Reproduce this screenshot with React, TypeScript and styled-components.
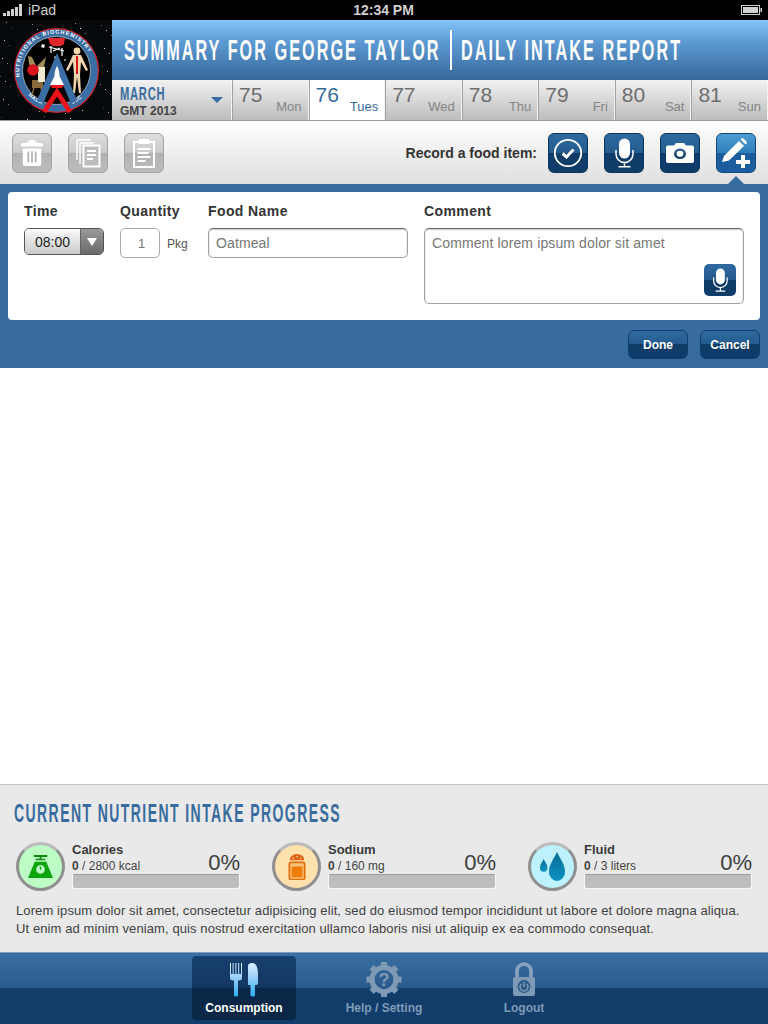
import React from "react";
import styled, { createGlobalStyle, css } from "styled-components";

const Global = createGlobalStyle`
  html, body { margin: 0; padding: 0; background: #fff; }
  body { font-family: "Liberation Sans", Arial, sans-serif; }
  * { box-sizing: border-box; }
`;

const Page = styled.div`
  width: 768px;
  height: 1024px;
  display: flex;
  flex-direction: column;
  overflow: hidden;
`;

const StatusBar = styled.div`
  height: 20px;
  background: #000;
  color: #d0d0d0;
  font-size: 14px;
  display: grid;
  grid-template-columns: 1fr auto 1fr;
  align-items: center;
  padding: 0 6px 0 3px;
`;

const StatusLeft = styled.div`
  display: flex;
  align-items: center;
  gap: 6px;
`;

const StatusTime = styled.div`
  font-weight: bold;
  font-size: 14px;
  padding-left: 2px;
`;

const StatusRight = styled.div`
  display: flex;
  justify-content: flex-end;
`;

const Header = styled.div`
  height: 101px;
  display: flex;
  border-bottom: 1px solid #9a9a9a;
`;

const Logo = styled.svg`
  width: 112px;
  height: 100px;
  flex-shrink: 0;
  display: block;
`;

const HeaderMain = styled.div`
  flex: 1;
  min-width: 0;
  display: flex;
  flex-direction: column;
`;

const TitleBand = styled.div`
  height: 60px;
  background: linear-gradient(#86c3fb 0, #5e9bd4 35%, #35689b 100%);
  display: flex;
  align-items: center;
  padding: 0 0 0 12px;
`;

// no Bebas here, so squeeze a bold sans to get the tall poster look
const condensed = css`
  font-weight: bold;
  text-transform: uppercase;
  white-space: nowrap;
  transform-origin: left center;
`;

const Title = styled.div<{ $width: number }>`
  ${condensed}
  width: ${({ $width }) => $width}px;
  flex-shrink: 0;
  color: #fff;
  font-size: 29px;
  letter-spacing: 3.6px;
  line-height: 40px;
  transform: scaleX(0.56);
`;

const TitleDivider = styled.div`
  width: 2px;
  height: 40px;
  background: #fff;
  margin: 0 9px 0 11px;
`;

const DateRow = styled.div`
  height: 40px;
  display: grid;
  grid-template-columns: 120px repeat(7, minmax(0, 1fr));
`;

const silver = css`
  background: linear-gradient(#f2f2f2, #bcbcbc);
`;

const MonthCell = styled.div`
  ${silver}
  border-right: 1px solid #f4f4f4;
  padding: 5px 8px 0;
  position: relative;
`;

const MonthName = styled.div`
  ${condensed}
  color: #386c9f;
  font-size: 18px;
  line-height: 19px;
  letter-spacing: 1.2px;
  transform: scaleX(0.62);
`;

const MonthYear = styled.div`
  color: #444;
  font-size: 12px;
  font-weight: bold;
  line-height: 13px;
  margin-top: 1px;
`;

const MonthCaret = styled.div`
  position: absolute;
  right: 8px;
  top: 17px;
  border-left: 6px solid transparent;
  border-right: 6px solid transparent;
  border-top: 6px solid #386c9f;
`;

const DayCell = styled.div<{ $active?: boolean }>`
  ${({ $active }) => ($active ? "background: #fff;" : silver)}
  border-left: 1px solid #9f9f9f;
  border-right: 1px solid #f4f4f4;
  padding: 3px 6px 0 6px;
  display: flex;
  flex-direction: column;
  color: ${({ $active }) => ($active ? "#386c9f" : "#6e6e6e")};
`;

const DayNumber = styled.div`
  font-size: 21px;
  line-height: 23px;
`;

const DayName = styled.div<{ $active?: boolean }>`
  align-self: flex-end;
  font-size: 13px;
  line-height: 14px;
  margin-top: -6px;
  color: ${({ $active }) => ($active ? "#386c9f" : "#858585")};
`;

const Toolbar = styled.div`
  height: 63px;
  background: linear-gradient(#fff, #dfdfdf);
  display: flex;
  align-items: center;
  padding: 0 12px;
  gap: 16px;
  position: relative;
`;

const RecordLabel = styled.div`
  margin-left: auto;
  font-size: 14px;
  font-weight: bold;
  color: #333;
  margin-right: -5px;
`;

const IconButton = styled.div<{ $kind: "gray" | "dark" | "bright" }>`
  width: 40px;
  height: 40px;
  border-radius: 6px;
  display: flex;
  align-items: center;
  justify-content: center;
  ${({ $kind }) =>
    $kind === "gray"
      ? `background: linear-gradient(#dedede, #c9c9c9 49%, #b3b3b3 50%, #bbb);
         border: 1px solid #a3a3a3;`
      : $kind === "dark"
      ? `background: linear-gradient(#2f6a9f, #245b8e 49%, #103c6a 50%, #103c6a);
         border: 1px solid #0d3560;`
      : `background: linear-gradient(#4b9cd2, #2f80ba 49%, #1b5d9e 50%, #1b5d9e);
         border: 1px solid #12487d;`}
`;

const Pointer = styled.div`
  position: absolute;
  right: 24px;
  bottom: 0;
  border-left: 8px solid transparent;
  border-right: 8px solid transparent;
  border-bottom: 8px solid #386c9f;
`;

const FormPanel = styled.div`
  height: 184px;
  background: #386c9f;
  padding: 8px 8px 0;
`;

const FormCard = styled.div`
  height: 128px;
  background: #fff;
  border-radius: 4px;
  padding: 11px 16px 0;
  display: flex;
`;

const Field = styled.div<{ $width: number; $gap: number }>`
  width: ${({ $width }) => $width}px;
  margin-right: ${({ $gap }) => $gap}px;
`;

const FieldLabel = styled.div`
  font-size: 14px;
  letter-spacing: 0.4px;
  font-weight: bold;
  color: #333;
  line-height: 16px;
  margin-bottom: 9px;
`;

const SelectBox = styled.div`
  width: 80px;
  height: 27px;
  margin-top: 1px;
  border: 1px solid #555;
  border-radius: 5px;
  display: flex;
  overflow: hidden;
`;

const SelectValue = styled.div`
  flex: 1;
  background: linear-gradient(#fbfbfb, #c9c9c9);
  border-right: 1px solid #666;
  font-size: 14px;
  color: #222;
  display: flex;
  align-items: center;
  justify-content: center;
`;

const SelectArrow = styled.div`
  width: 22px;
  background: linear-gradient(#9a9a9a, #6a6a6a);
  display: flex;
  align-items: center;
  justify-content: center;

  &::after {
    content: "";
    border-left: 5px solid transparent;
    border-right: 5px solid transparent;
    border-top: 8px solid #fff;
  }
`;

const QuantityRow = styled.div`
  display: flex;
  align-items: center;
  gap: 7px;
`;

const QuantityBox = styled.div`
  width: 40px;
  height: 30px;
  border: 1px solid #a9a9a9;
  border-radius: 5px;
  color: #777;
  font-size: 13px;
  display: flex;
  align-items: center;
  justify-content: center;
  padding-left: 3px;
`;

const Unit = styled.div`
  font-size: 12px;
  color: #555;
  padding-top: 1px;
`;

const TextBox = styled.div<{ $tall?: boolean }>`
  height: ${({ $tall }) => ($tall ? 76 : 30)}px;
  border: 1px solid #a0a0a0;
  border-top-color: #666;
  border-radius: 5px;
  box-shadow: inset 0 1px 2px rgba(0, 0, 0, 0.22);
  color: #777;
  font-size: 14px;
  letter-spacing: 0.12px;
  line-height: 16px;
  padding: 6px 7px;
  position: relative;
`;

const MicButton = styled.div`
  position: absolute;
  right: 7px;
  bottom: 7px;
  width: 32px;
  height: 32px;
  border-radius: 5px;
  background: linear-gradient(#2f6a9f, #245b8e 49%, #103c6a 50%, #103c6a);
  display: flex;
  align-items: center;
  justify-content: center;
`;

const FormActions = styled.div`
  display: flex;
  justify-content: flex-end;
  gap: 12px;
  margin-top: 10px;
`;

const ActionButton = styled.div`
  width: 60px;
  height: 29px;
  border-radius: 6px;
  border: 1px solid #11406f;
  background: linear-gradient(#2f6a9f, #245b8e 49%, #103c6a 50%, #103c6a);
  color: #fff;
  font-size: 12px;
  font-weight: bold;
  display: flex;
  align-items: center;
  justify-content: center;
`;

const Blank = styled.div`
  flex: 1;
  background: #fff;
`;

const Progress = styled.div`
  height: 168px;
  background: #e9e9e9;
  border-top: 1px solid #c6c6c6;
  padding: 13px 16px 0;
`;

const ProgressTitle = styled.div`
  ${condensed}
  color: #386c9f;
  font-size: 25px;
  line-height: 30px;
  letter-spacing: 2.55px;
  margin: 0 0 0 -2px;
  transform: scaleX(0.56);
`;

const NutrientGrid = styled.div`
  display: grid;
  grid-template-columns: repeat(3, 224px);
  column-gap: 32px;
  margin-top: 14px;
`;

const Nutrient = styled.div`
  display: flex;
  gap: 7px;
  height: 50px;
`;

const Badge = styled.div<{ $bg: string }>`
  width: 49px;
  height: 49px;
  border-radius: 50%;
  flex-shrink: 0;
  background: ${({ $bg }) => $bg};
  border: 3px solid #8f8f8f;
  border-top-color: #bcbcbc;
  display: flex;
  align-items: center;
  justify-content: center;
`;

const NutrientBody = styled.div`
  flex: 1;
  min-width: 0;
`;

const NutrientHead = styled.div`
  display: flex;
  justify-content: space-between;
  align-items: flex-end;
  height: 32px;
`;

const NutrientName = styled.div`
  font-size: 13px;
  font-weight: bold;
  color: #3a3a3a;
  line-height: 15px;
  margin-bottom: 1px;
`;

const NutrientAmount = styled.div`
  font-size: 12px;
  color: #444;
  line-height: 16px;
`;

const Percent = styled.div`
  font-size: 22px;
  color: #3d3d3d;
  line-height: 24px;
  margin-bottom: -1px;
`;

const Bar = styled.div`
  height: 15px;
  background: #bdbdbd;
  border-radius: 3px;
  border: 1px solid #f8f8f8;
  border-top-color: #9d9d9d;
`;

const ProgressNote = styled.p`
  margin: 10px 0 0;
  font-size: 13px;
  letter-spacing: 0.1px;
  line-height: 18px;
  color: #3f3f3f;
  white-space: nowrap;
`;

const TabBar = styled.div`
  height: 72px;
  background: linear-gradient(#3a6fa3, #2b5b8c 49%, #123d6b 50%, #123d6b);
  border-top: 1px solid #7f9dba;
  display: flex;
  justify-content: center;
  gap: 36px;
  padding-top: 3px;
`;

const TabItem = styled.div<{ $active?: boolean }>`
  width: 104px;
  height: 64px;
  border-radius: 4px;
  display: flex;
  flex-direction: column;
  align-items: center;
  padding-top: 6px;
  color: ${({ $active }) => ($active ? "#fff" : "#7f9ab5")};
  background: ${({ $active }) =>
    $active ? "linear-gradient(#17406f, #133763 49%, #0a2747 50%, #0a2747)" : "transparent"};
`;

const TabIcon = styled.svg`
  display: block;
  width: 40px;
  height: 36px;
`;

const TabLabel = styled.div`
  font-size: 12px;
  font-weight: bold;
  line-height: 14px;
  margin-top: 3px;
`;

const days = [
  ["75", "Mon"],
  ["76", "Tues"],
  ["77", "Wed"],
  ["78", "Thu"],
  ["79", "Fri"],
  ["80", "Sat"],
  ["81", "Sun"],
];

const stars = Array.from({ length: 70 }, (_, i) => ({
  x: (i * 37 + 11) % 112,
  y: (i * 53 + 7) % 100,
  o: 0.25 + ((i * 7) % 10) / 14,
}));

function MissionLogo() {
  return (
    <Logo viewBox="0 0 112 100">
      <rect width="112" height="100" fill="#06090c" />
      {stars.map((s, i) => (
        <rect key={i} x={s.x} y={s.y} width="1" height="1" fill="#fff" opacity={s.o} />
      ))}
      <circle cx="56.5" cy="50.5" r="42.500" fill="#d8262c" />
      <circle cx="56.5" cy="50.5" r="41.300" fill="#3a6ea5" />
      <circle cx="56.5" cy="50.5" r="34" fill="#000" stroke="#dfe7ee" strokeWidth="0.6" />
      <defs>
        <path id="ringTop" d="M 20 58 A 37.200 37.200 0 1 1 93 58" />
        <path id="ringBottom" d="M 23 68 A 38.500 38.500 0 0 0 90 68" />
      </defs>
      <text fontFamily="'Liberation Sans', sans-serif" fontSize="5.4" fontWeight="bold" fill="#fff" letterSpacing="1.05">
        <textPath href="#ringTop" startOffset="1">NUTRITIONAL BIOCHEMISTRY</textPath>
      </text>
      <text fontFamily="'Liberation Sans', sans-serif" fontSize="5.2" fontWeight="bold" fill="#fff" letterSpacing="0.5">
        <textPath href="#ringBottom" startOffset="9">NASA</textPath>
      </text>
      <text fontFamily="'Liberation Sans', sans-serif" fontSize="5.2" fontWeight="bold" fill="#fff" letterSpacing="0.5">
        <textPath href="#ringBottom" startOffset="57">JSC</textPath>
      </text>
      {/* red cap and station */}
      <path d="M48 18h17l-1 6-3 2h-8l-3-2z" fill="#e0262c" />
      <path d="M49 27l15 4M51 26v7M62 28v8M53 31l7-3" stroke="#fff" strokeWidth="1.2" fill="none" />
      <path d="M42 24l3 1-1 3-3-1zM55 36l2 1-1 2-2-1zM65 39l1 1-1 1-1-1z" fill="#fff" />
      {/* wheat, apple and cream over the stand */}
      <path d="M28 36l4 1 6 13-5 0-4-6zM46 37l-2 10-4 4-3-5z" fill="#a08a55" />
      <path d="M32 60h11v8H32z" fill="#8a6a3a" />
      <path d="M38 47h7v15h-7z" fill="#efe9d2" />
      <circle cx="33" cy="50" r="5.800" fill="#d7141c" />
      <path d="M34 68l-2 7M41 68l1 5" stroke="#8a6a3a" strokeWidth="1.500" />
      {/* body figure */}
      <circle cx="77" cy="31" r="3.400" fill="#f2d6ae" />
      <path d="M73 35h8l7 15-2 1-5-9-1 13 1 18h-2l-2-16-2 16h-2l1-18-1-13-5 9-2-1z" fill="#f2d6ae" />
      <path d="M77 36v18" stroke="#d7141c" strokeWidth="2" />
      {/* chevron and shuttle */}
      <path d="M40 82L57 42l17 40" fill="none" stroke="#3a6ea5" strokeWidth="7" strokeLinejoin="miter" />
      <path d="M44 92l13-20 13 20" fill="none" stroke="#e8141c" strokeWidth="5" strokeLinejoin="miter" />
      <path d="M57 46c1.500 2.500 2.500 6 2.500 10l4.500 9H50l4.500-9c0-4 1-7.500 2.500-10z" fill="#fff" />
      <path d="M50 65h14l-2 3H52z" fill="#e8141c" />
    </Logo>
  );
}

const white = { fill: "#fff" };

function TrashIcon() {
  return (
    <svg width="24" height="28" viewBox="0 0 26 30">
      <path d="M9 3l1-2h6l1 2 8 2v3H1V5z" {...white} />
      <path
        fillRule="evenodd"
        d="M3 10h20v17a2 2 0 0 1-2 2H5a2 2 0 0 1-2-2zM8 13v12h2V13zM12 13v12h2V13zM16 13v12h2V13z"
        {...white}
      />
    </svg>
  );
}

function CopyIcon() {
  return (
    <svg width="26" height="30" viewBox="0 0 26 30" fill="none" stroke="#fff" strokeWidth="1.400">
      <path d="M2 2h14M2 2v20M5 5h14M5 5v21" />
      <rect x="8.500" y="7.500" width="16" height="21" fill="#bdbdbd" strokeWidth="2" />
      <path d="M12 13h9M12 17h9M12 21h6" strokeWidth="2" />
    </svg>
  );
}

function ClipboardIcon() {
  return (
    <svg width="24" height="30" viewBox="0 0 24 30" fill="none" stroke="#fff" strokeWidth="2">
      <rect x="2" y="4" width="20" height="25" />
      <rect x="7" y="1" width="10" height="5" fill="#fff" stroke="none" />
      <path d="M5.500 11h13M5.500 15h11M5.500 19h13M5.500 23h8" />
    </svg>
  );
}

function CheckIcon() {
  return (
    <svg width="30" height="30" viewBox="0 0 30 30" fill="none" stroke="#fff">
      <circle cx="15" cy="15" r="13.200" strokeWidth="1.800" />
      <path d="M9.500 15.500l4 3.500 7-7.500" strokeWidth="3" />
    </svg>
  );
}

function MicIcon({ size }: { size: number }) {
  return (
    <svg width={size * 0.7} height={size} viewBox="0 0 21 30" fill="none" stroke="#fff" strokeWidth="1.500">
      <rect x="5" y="0.500" width="11" height="20" rx="5.500" fill="#fff" stroke="none" />
      <path d="M2 12v4a8.500 8.500 0 0 0 17 0v-4M10.500 24.500v4M4.500 28.800h12" />
    </svg>
  );
}

function CameraIcon() {
  return (
    <svg width="28" height="21" viewBox="0 0 28 24" preserveAspectRatio="none">
      <path
        fillRule="evenodd"
        d="M2 4h6l2-3h8l2 3h6a2 2 0 0 1 2 2v16a2 2 0 0 1-2 2H2a2 2 0 0 1-2-2V6a2 2 0 0 1 2-2zM14 7.500a6 6 0 1 0 0 12 6 6 0 0 0 0-12zM14 10a3.500 3.500 0 1 1 0 7 3.500 3.500 0 0 1 0-7z"
        {...white}
      />
    </svg>
  );
}

function PencilPlusIcon() {
  return (
    <svg width="30" height="30" viewBox="0 0 30 30">
      <path d="M1 24l2-6L18 3l5 5L8 22.500z" {...white} />
      <path d="M19.500 1.500l1-1a1.500 1.500 0 0 1 2 0l3 3a1.500 1.500 0 0 1 0 2l-1 1z" {...white} />
      <path d="M20 17h4v5h5v4h-5v4h-4v-4h-5v-4h5z" {...white} />
    </svg>
  );
}

function ScaleIcon() {
  return (
    <svg width="25" height="23" viewBox="0 0 26 24">
      <path d="M6 0h14v2H6zM8 4h10v1.500H8z" fill="#0f8a0f" />
      <path d="M12 2h2v3h-2z" fill="#0f8a0f" />
      <path
        fillRule="evenodd"
        d="M7 7h12l7 17H0zM13 10.500a4.500 4.500 0 1 0 0 9 4.500 4.500 0 0 0 0-9z"
        fill="#0aa50a"
      />
      <path d="M12.300 12h1.400v3.500h-1.400z" fill="#0aa50a" />
    </svg>
  );
}

function ShakerIcon() {
  return (
    <svg width="18" height="27" viewBox="0 0 20 30">
      <path d="M2 8a8 7 0 0 1 16 0z" fill="#e2600f" />
      <circle cx="6" cy="6" r="0.900" fill="#ffdca8" />
      <circle cx="10" cy="4" r="0.900" fill="#ffdca8" />
      <circle cx="14" cy="6" r="0.900" fill="#ffdca8" />
      <rect x="1.500" y="10.500" width="17" height="19" rx="2" fill="#f6c47a" stroke="#e2700f" strokeWidth="2" />
      <rect x="4" y="15" width="12" height="12" fill="#ee7d0a" />
    </svg>
  );
}

function DropsIcon() {
  return (
    <svg width="25" height="29" viewBox="0 0 25 29">
      <defs>
        <linearGradient id="dropFill" x1="0" y1="0" x2="0" y2="1">
          <stop offset="0" stopColor="#0b6a94" />
          <stop offset="1" stopColor="#0a93c4" />
        </linearGradient>
      </defs>
      <path d="M17 0c2.500 6 8 12 8 20a8 9 0 0 1-16 0c0-8 5.500-14 8-20z" fill="url(#dropFill)" />
      <path d="M3.700 7c1 2.500 3.700 5 3.700 8.500a3.700 4.300 0 0 1-7.400 0C0 12 2.700 9.500 3.700 7z" fill="url(#dropFill)" />
    </svg>
  );
}

function CutleryIcon() {
  return (
    <TabIcon viewBox="0 0 40 36">
      <defs>
        <linearGradient id="blade" x1="0" y1="0" x2="0" y2="1">
          <stop offset="0" stopColor="#dbeeff" />
          <stop offset="0.5" stopColor="#8ecbf8" />
          <stop offset="1" stopColor="#27aef2" />
        </linearGradient>
      </defs>
      <path
        d="M6 1h1v11h1.600V1h1v11h1.800V1h1v11h1.800V1h1v11H17V1h1v15c0 1.500-1 2.500-3 2.500H14V33a1.500 1.500 0 0 1-1.500 1.500h-1A1.500 1.500 0 0 1 10 33V18.500H9c-2 0-3-1-3-2.500z"
        fill="url(#blade)"
      />
      <path
        d="M24 4c0-2 1.500-3 4.500-3S34 5 34 12v9c0 1-1 2-2 2h-1v10a1.500 1.500 0 0 1-1.500 1.500H28a1.500 1.500 0 0 1-1.500-1.500V23H24z"
        fill="url(#blade)"
      />
    </TabIcon>
  );
}

function GearIcon() {
  const teeth = [0, 45, 90, 135, 180, 225, 270, 315];
  return (
    <TabIcon viewBox="0 0 40 36">
      <g fill="#7f9ab5">
        {teeth.map(a => (
          <rect key={a} x="17" y="0" width="6" height="8" transform={`rotate(${a} 20 17.500)`} />
        ))}
      </g>
      <circle cx="20" cy="17.500" r="12" fill="none" stroke="#7f9ab5" strokeWidth="5" />
      <text
        x="20"
        y="24"
        textAnchor="middle"
        fontFamily="'Liberation Sans', sans-serif"
        fontSize="18"
        fontWeight="bold"
        fill="#7f9ab5"
      >
        ?
      </text>
    </TabIcon>
  );
}

function LockIcon() {
  return (
    <TabIcon viewBox="0 0 40 36">
      <path d="M13 16V9a7 7 0 0 1 14 0v7" fill="none" stroke="#8aa3bc" strokeWidth="3.500" />
      <rect x="9" y="15" width="22" height="19" rx="2" fill="#7f9ab5" />
      <circle cx="20" cy="24.500" r="6.500" fill="#2d5a86" />
      <path d="M17.300 22a4 4 0 1 0 5.400 0" fill="none" stroke="#7f9ab5" strokeWidth="1.500" />
      <path d="M20 20v5" stroke="#7f9ab5" strokeWidth="1.500" />
    </TabIcon>
  );
}

const nutrients = [
  { name: "Calories", total: "2800 kcal", bg: "#bdfcc4", icon: <ScaleIcon /> },
  { name: "Sodium", total: "160 mg", bg: "#ffe1ae", icon: <ShakerIcon /> },
  { name: "Fluid", total: "3 liters", bg: "#bdf1fd", icon: <DropsIcon /> },
];

export default function App() {
  return (
    <Page>
      <Global />
      <StatusBar>
        <StatusLeft>
          <svg width="19" height="12" viewBox="0 0 19 12" fill="#d0d0d0">
            <rect x="0" y="9" width="3" height="3" />
            <rect x="4" y="7" width="3" height="5" />
            <rect x="8" y="5" width="3" height="7" />
            <rect x="12" y="3" width="3" height="9" />
            <rect x="16" y="0" width="3" height="12" />
          </svg>
          iPad
        </StatusLeft>
        <StatusTime>12:34 PM</StatusTime>
        <StatusRight>
          <svg width="21" height="10" viewBox="0 0 21 10">
            <rect x="0.500" y="0.500" width="18" height="9" fill="none" stroke="#d0d0d0" />
            <rect x="2" y="2" width="15" height="6" fill="#d0d0d0" />
            <rect x="19.500" y="3" width="1.500" height="4" fill="#d0d0d0" />
          </svg>
        </StatusRight>
      </StatusBar>

      <Header>
        <MissionLogo />
        <HeaderMain>
          <TitleBand>
            <Title $width={315}>Summary for George Taylor</Title>
            <TitleDivider />
            <Title $width={221}>Daily Intake Report</Title>
          </TitleBand>
          <DateRow>
            <MonthCell>
              <MonthName>March</MonthName>
              <MonthYear>GMT 2013</MonthYear>
              <MonthCaret />
            </MonthCell>
            {days.map(([num, name]) => (
              <DayCell key={num} $active={num === "76"}>
                <DayNumber>{num}</DayNumber>
                <DayName $active={num === "76"}>{name}</DayName>
              </DayCell>
            ))}
          </DateRow>
        </HeaderMain>
      </Header>

      <Toolbar>
        <IconButton $kind="gray"><TrashIcon /></IconButton>
        <IconButton $kind="gray"><CopyIcon /></IconButton>
        <IconButton $kind="gray"><ClipboardIcon /></IconButton>
        <RecordLabel>Record a food item:</RecordLabel>
        <IconButton $kind="dark"><CheckIcon /></IconButton>
        <IconButton $kind="dark"><MicIcon size={30} /></IconButton>
        <IconButton $kind="dark"><CameraIcon /></IconButton>
        <IconButton $kind="bright"><PencilPlusIcon /></IconButton>
        <Pointer />
      </Toolbar>

      <FormPanel>
        <FormCard>
          <Field $width={80} $gap={16}>
            <FieldLabel>Time</FieldLabel>
            <SelectBox>
              <SelectValue>08:00</SelectValue>
              <SelectArrow />
            </SelectBox>
          </Field>
          <Field $width={72} $gap={16}>
            <FieldLabel>Quantity</FieldLabel>
            <QuantityRow>
              <QuantityBox>1</QuantityBox>
              <Unit>Pkg</Unit>
            </QuantityRow>
          </Field>
          <Field $width={200} $gap={16}>
            <FieldLabel>Food Name</FieldLabel>
            <TextBox>Oatmeal</TextBox>
          </Field>
          <Field $width={320} $gap={0}>
            <FieldLabel>Comment</FieldLabel>
            <TextBox $tall>
              Comment lorem ipsum dolor sit amet
              <MicButton><MicIcon size={24} /></MicButton>
            </TextBox>
          </Field>
        </FormCard>
        <FormActions>
          <ActionButton>Done</ActionButton>
          <ActionButton>Cancel</ActionButton>
        </FormActions>
      </FormPanel>

      <Blank />

      <Progress>
        <ProgressTitle>Current Nutrient Intake Progress</ProgressTitle>
        <NutrientGrid>
          {nutrients.map(n => (
            <Nutrient key={n.name}>
              <Badge $bg={n.bg}>{n.icon}</Badge>
              <NutrientBody>
                <NutrientHead>
                  <div>
                    <NutrientName>{n.name}</NutrientName>
                    <NutrientAmount><b>0</b> / {n.total}</NutrientAmount>
                  </div>
                  <Percent>0%</Percent>
                </NutrientHead>
                <Bar />
              </NutrientBody>
            </Nutrient>
          ))}
        </NutrientGrid>
        <ProgressNote>
          Lorem ipsum dolor sit amet, consectetur adipisicing elit, sed do eiusmod tempor incididunt ut labore et dolore magna aliqua.
          <br />
          Ut enim ad minim veniam, quis nostrud exercitation ullamco laboris nisi ut aliquip ex ea commodo consequat.
        </ProgressNote>
      </Progress>

      <TabBar>
        <TabItem $active>
          <CutleryIcon />
          <TabLabel>Consumption</TabLabel>
        </TabItem>
        <TabItem>
          <GearIcon />
          <TabLabel>Help / Setting</TabLabel>
        </TabItem>
        <TabItem>
          <LockIcon />
          <TabLabel>Logout</TabLabel>
        </TabItem>
      </TabBar>
    </Page>
  );
}
